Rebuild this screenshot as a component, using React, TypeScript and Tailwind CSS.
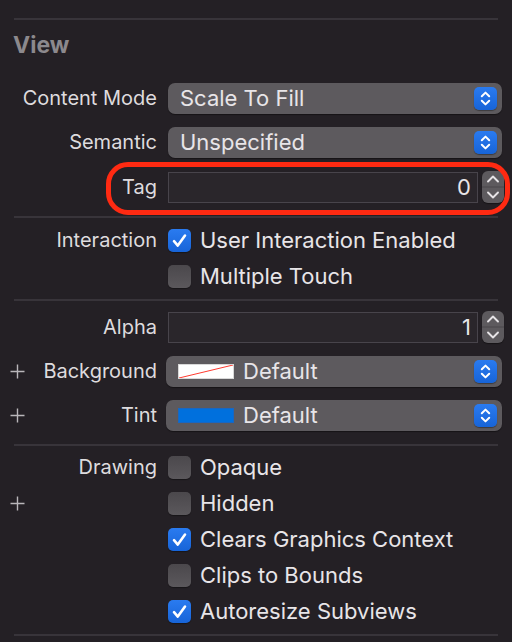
import React from "react";

const font = { fontFamily: "Inter, 'Noto Sans', sans-serif" };

function Divider() {
  return <div className="mx-[14px] h-[2px] bg-[#38343a]" />;
}

function Plus() {
  return (
    <svg width="15" height="15" viewBox="0 0 15 15" className="shrink-0">
      <path d="M7.5 0.5V14.5M0.5 7.5H14.5" stroke="#b9b6ba" strokeWidth="1.4" />
    </svg>
  );
}

function Label({ text, plus = false }: { text?: string; plus?: boolean }) {
  return (
    <div className="w-[157px] shrink-0 flex items-center justify-between pl-[10px]">
      <div className="w-[15px]">{plus ? <Plus /> : null}</div>
      <span className="text-[20px] text-[#dedbde] leading-none whitespace-nowrap">{text}</span>
    </div>
  );
}

function UpDown() {
  return (
    <div className="w-[23px] h-[23px] rounded-[5px] bg-gradient-to-b from-[#2a7bf0] to-[#1764d8] flex items-center justify-center shadow-[0_1px_1px_rgba(0,0,0,0.35)] shrink-0">
      <svg width="23" height="23" viewBox="0 0 23 23">
        <path d="M7.8 9.2L11.5 5.6L15.2 9.2M7.8 13.8L11.5 17.4L15.2 13.8" stroke="#ffffff" strokeWidth="2" fill="none" strokeLinecap="round" strokeLinejoin="round" />
      </svg>
    </div>
  );
}

function Popup({ children, ml = "ml-[11px]" }: { children: React.ReactNode; ml?: string }) {
  return (
    <div className={`${ml} flex-1 h-[31px] rounded-[7px] bg-[#5d5a5e] shadow-[0_1px_1px_rgba(0,0,0,0.4)] flex items-center pl-[12px] pr-[5px]`}>
      <div className="flex-1 flex items-center text-[22px] text-[#e8e5e8] leading-none whitespace-nowrap">{children}</div>
      <UpDown />
    </div>
  );
}

function Stepper() {
  return (
    <div className="ml-[4px] mr-[-2px] w-[22px] h-[32px] rounded-[6px] bg-[#5d5a5e] shadow-[0_1px_1px_rgba(0,0,0,0.4)] flex flex-col shrink-0">
      <svg width="22" height="32" viewBox="0 0 22 32">
        <path d="M6 10.5L11 5.5L16 10.5" stroke="#e6e3e6" strokeWidth="1.9" fill="none" strokeLinecap="round" strokeLinejoin="round" />
        <line x1="0" y1="16" x2="22" y2="16" stroke="#4a474b" strokeWidth="1" />
        <path d="M6 21.5L11 26.5L16 21.5" stroke="#e6e3e6" strokeWidth="1.9" fill="none" strokeLinecap="round" strokeLinejoin="round" />
      </svg>
    </div>
  );
}

function NumberField({ value }: { value: string }) {
  return (
    <div className="ml-[11px] flex-1 flex items-center">
      <div className="flex-1 h-[31px] bg-[#2a262b] border border-[#48444b] flex items-center justify-end pr-[6px]">
        <span className="text-[22px] text-[#e8e5e8] leading-none">{value}</span>
      </div>
      <Stepper />
    </div>
  );
}

function Checkbox({ checked }: { checked: boolean }) {
  if (checked) {
    return (
      <div className="w-[23px] h-[23px] rounded-[5px] bg-gradient-to-b from-[#2a7bf0] to-[#1764d8] shadow-[0_1px_1px_rgba(0,0,0,0.35)] shrink-0">
        <svg width="23" height="23" viewBox="0 0 23 23">
          <path d="M6 12.2L9.8 16.6L17 6.6" stroke="#ffffff" strokeWidth="2.6" fill="none" strokeLinecap="round" strokeLinejoin="round" />
        </svg>
      </div>
    );
  }
  return <div className="w-[23px] h-[23px] rounded-[5px] bg-gradient-to-b from-[#4b484c] to-[#5b585c] shadow-[0_1px_1px_rgba(0,0,0,0.35)] shrink-0" />;
}

function CheckRow({ label, plus, text, checked }: { label?: string; plus?: boolean; text: string; checked: boolean }) {
  return (
    <div className="h-[36px] flex items-center pr-[10px]">
      <Label text={label} plus={plus} />
      <div className="ml-[11px] flex items-center gap-[9px]">
        <Checkbox checked={checked} />
        <span className="text-[22px] text-[#e8e5e8] leading-none whitespace-nowrap">{text}</span>
      </div>
    </div>
  );
}

export default function App() {
  return (
    <div className="w-[512px] h-[642px] bg-[#242025] overflow-hidden" style={font}>
      <div className="h-[18px]" />
      <Divider />
      <div className="h-[50px] flex items-center pl-[13px]">
        <span className="text-[23px] font-bold text-[#8c898d] leading-none">View</span>
      </div>
      <div className="h-[6px]" />
      <div className="h-[44px] flex items-center pr-[10px]">
        <Label text="Content Mode" />
        <Popup>Scale To Fill</Popup>
      </div>
      <div className="h-[44px] flex items-center pr-[10px]">
        <Label text="Semantic" />
        <Popup>Unspecified</Popup>
      </div>
      <div className="relative h-[46px] flex items-center pr-[10px]">
        <Label text="Tag" />
        <NumberField value="0" />
        <div className="absolute left-[106px] top-[-2px] w-[404px] h-[53px] rounded-[22px] border-[5px] border-[#ff2a12]" />
      </div>
      <div className="h-[6px]" />
      <Divider />
      <div className="h-[4px]" />
      <CheckRow label="Interaction" text="User Interaction Enabled" checked />
      <CheckRow text="Multiple Touch" checked={false} />
      <div className="h-[5px]" />
      <Divider />
      <div className="h-[4px]" />
      <div className="h-[44px] flex items-center pr-[10px]">
        <Label text="Alpha" />
        <NumberField value="1" />
      </div>
      <div className="h-[44px] flex items-center pr-[10px]">
        <Label text="Background" plus />
        <Popup ml="ml-[9px]">
          <div className="w-[56px] h-[15px] bg-white mr-[9px] shrink-0 border border-[#d8d8d8]">
            <svg width="54" height="13" viewBox="0 0 54 13" className="block">
              <line x1="0" y1="13" x2="54" y2="0" stroke="#ff3b30" strokeWidth="1" />
            </svg>
          </div>
          Default
        </Popup>
      </div>
      <div className="h-[44px] flex items-center pr-[10px]">
        <Label text="Tint" plus />
        <Popup ml="ml-[9px]">
          <div className="w-[56px] h-[15px] bg-[#0070dd] mr-[9px] shrink-0 border border-[#1a66c0]" />
          Default
        </Popup>
      </div>
      <div className="h-[7px]" />
      <Divider />
      <div className="h-[3px]" />
      <CheckRow label="Drawing" text="Opaque" checked={false} />
      <CheckRow plus text="Hidden" checked={false} />
      <CheckRow text="Clears Graphics Context" checked />
      <CheckRow text="Clips to Bounds" checked={false} />
      <CheckRow text="Autoresize Subviews" checked />
      <div className="h-[5px]" />
      <Divider />
    </div>
  );
}
